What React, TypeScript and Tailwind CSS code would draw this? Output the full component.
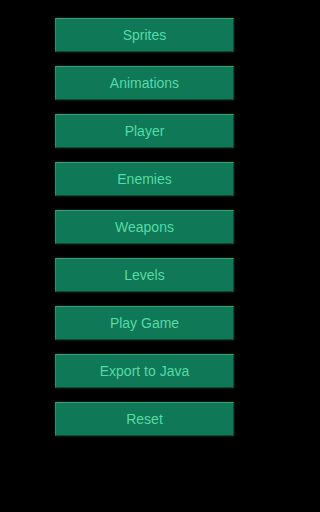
const items = [
  "Sprites",
  "Animations",
  "Player",
  "Enemies",
  "Weapons",
  "Levels",
  "Play Game",
  "Export to Java",
  "Reset",
];

export default function App() {
  return (
    <div
      className="min-h-[512px] w-full bg-black"
      style={{ fontFamily: '"Liberation Sans", Arial, sans-serif' }}
    >
      <div className="flex w-[288px] flex-col items-center gap-[14px] pt-[18px] pl-[1px]">
        {items.map((label) => (
          <button
            key={label}
            className="flex h-[34px] w-[179px] items-center justify-center border border-t-[#3b9e78] border-l-[#2f8f69] border-r-[#0a5038] border-b-[#0a4a34] bg-[#0f7856] text-[14px] text-[#55dba6] shadow-[0_0_2px_#0b3d2a]"
          >
            {label}
          </button>
        ))}
      </div>
    </div>
  );
}
